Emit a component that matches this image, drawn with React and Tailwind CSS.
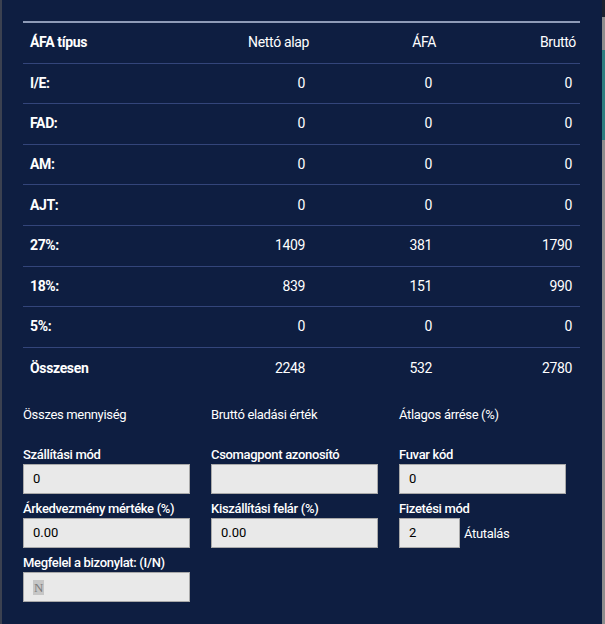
import React from 'react';

const ROWS = [
  { label: 'I/E:', net: '0', vat: '0', gross: '0' },
  { label: 'FAD:', net: '0', vat: '0', gross: '0' },
  { label: 'AM:', net: '0', vat: '0', gross: '0' },
  { label: 'AJT:', net: '0', vat: '0', gross: '0' },
  { label: '27%:', net: '1409', vat: '381', gross: '1790' },
  { label: '18%:', net: '839', vat: '151', gross: '990' },
  { label: '5%:', net: '0', vat: '0', gross: '0' },
  { label: 'Összesen', net: '2248', vat: '532', gross: '2780' },
];

const COLS = 'grid grid-cols-[160px_130px_127px_140px] items-center';

function Field({ label, value, children }) {
  return (
    <div className="flex flex-col gap-[1px]">
      <label className="h-[16px] leading-[16px] text-[13px] font-medium tracking-tight text-white">{label}</label>
      {children || (
        <div className="h-[30px] w-[167px] border border-[#a9a9a9] bg-[#e9e9e9] pl-[9px] text-[13px] leading-[28px] text-black">
          {value}
        </div>
      )}
    </div>
  );
}

export default function App() {
  return (
    <div className="flex h-[624px] w-[605px] overflow-hidden font-['Roboto',sans-serif]">
      {/* page behind the dialog */}
      <div className="w-[2px] bg-[#3b4150]" />

      <div className="flex-1 bg-[#0e1e41] pl-[21px] pt-[21px]">
        {/* ÁFA table */}
        <div className="w-[557px] border-t-2 border-[#8e9bb7]">
          <div className={`${COLS} h-[40.6px] border-b border-[#33457a] text-[14px] tracking-tight text-white`}>
            <div className="pl-[7px] font-bold">ÁFA típus</div>
            <div className="pr-[4px] text-right">Nettó alap</div>
            <div className="pr-[4px] text-right">ÁFA</div>
            <div className="pr-[4px] text-right">Bruttó</div>
          </div>
          {ROWS.map((r, i) => (
            <div
              key={r.label}
              className={`${COLS} h-[40.6px] text-[14px] tracking-tight text-white ${i < ROWS.length - 1 ? 'border-b border-[#33457a]' : ''}`}
            >
              <div className="pl-[7px] font-bold">{r.label}</div>
              <div className="pr-[8px] text-right">{r.net}</div>
              <div className="pr-[8px] text-right">{r.vat}</div>
              <div className="pr-[8px] text-right">{r.gross}</div>
            </div>
          ))}
        </div>

        {/* summary */}
        <div className="mt-[19px] grid grid-cols-[167px_167px_167px] gap-x-[21px] text-[13px] leading-[16px] tracking-tight text-white">
          <div>Összes mennyiség</div>
          <div>Bruttó eladási érték</div>
          <div>Átlagos árrése (%)</div>
        </div>

        {/* form */}
        <div className="mt-[24px] grid grid-cols-[167px_167px_167px] gap-x-[21px] gap-y-[7px]">
          <Field label="Szállítási mód" value="0" />
          <Field label="Csomagpont azonosító" value="" />
          <Field label="Fuvar kód" value="0" />

          <Field label="Árkedvezmény mértéke (%)" value="0.00" />
          <Field label="Kiszállítási felár (%)" value="0.00" />
          <Field label="Fizetési mód">
            <div className="flex items-center gap-[4px]">
              <div className="h-[30px] w-[61px] border border-[#a9a9a9] bg-[#e9e9e9] pl-[9px] text-[13px] leading-[28px] text-black">2</div>
              <span className="text-[13px] tracking-tight text-white">Átutalás</span>
            </div>
          </Field>

          <Field label="Megfelel a bizonylat: (I/N)">
            <div className="flex h-[30px] w-[167px] items-center border border-[#a9a9a9] bg-[#e9e9e9] pl-[9px]">
              <span className="bg-[#c6c6c6] px-[1px] font-['Liberation_Serif',serif] text-[13px] leading-[15px] text-[#7d7d7d]">N</span>
            </div>
          </Field>
        </div>
      </div>

      <div className="flex w-[3px] flex-col bg-[#8d8d8d]">
        <div className="h-[17px] bg-[#1b2330]" />
        <div className="h-[33px]" />
        <div className="h-[90px] bg-[#2f7d80]" />
      </div>
    </div>
  );
}
